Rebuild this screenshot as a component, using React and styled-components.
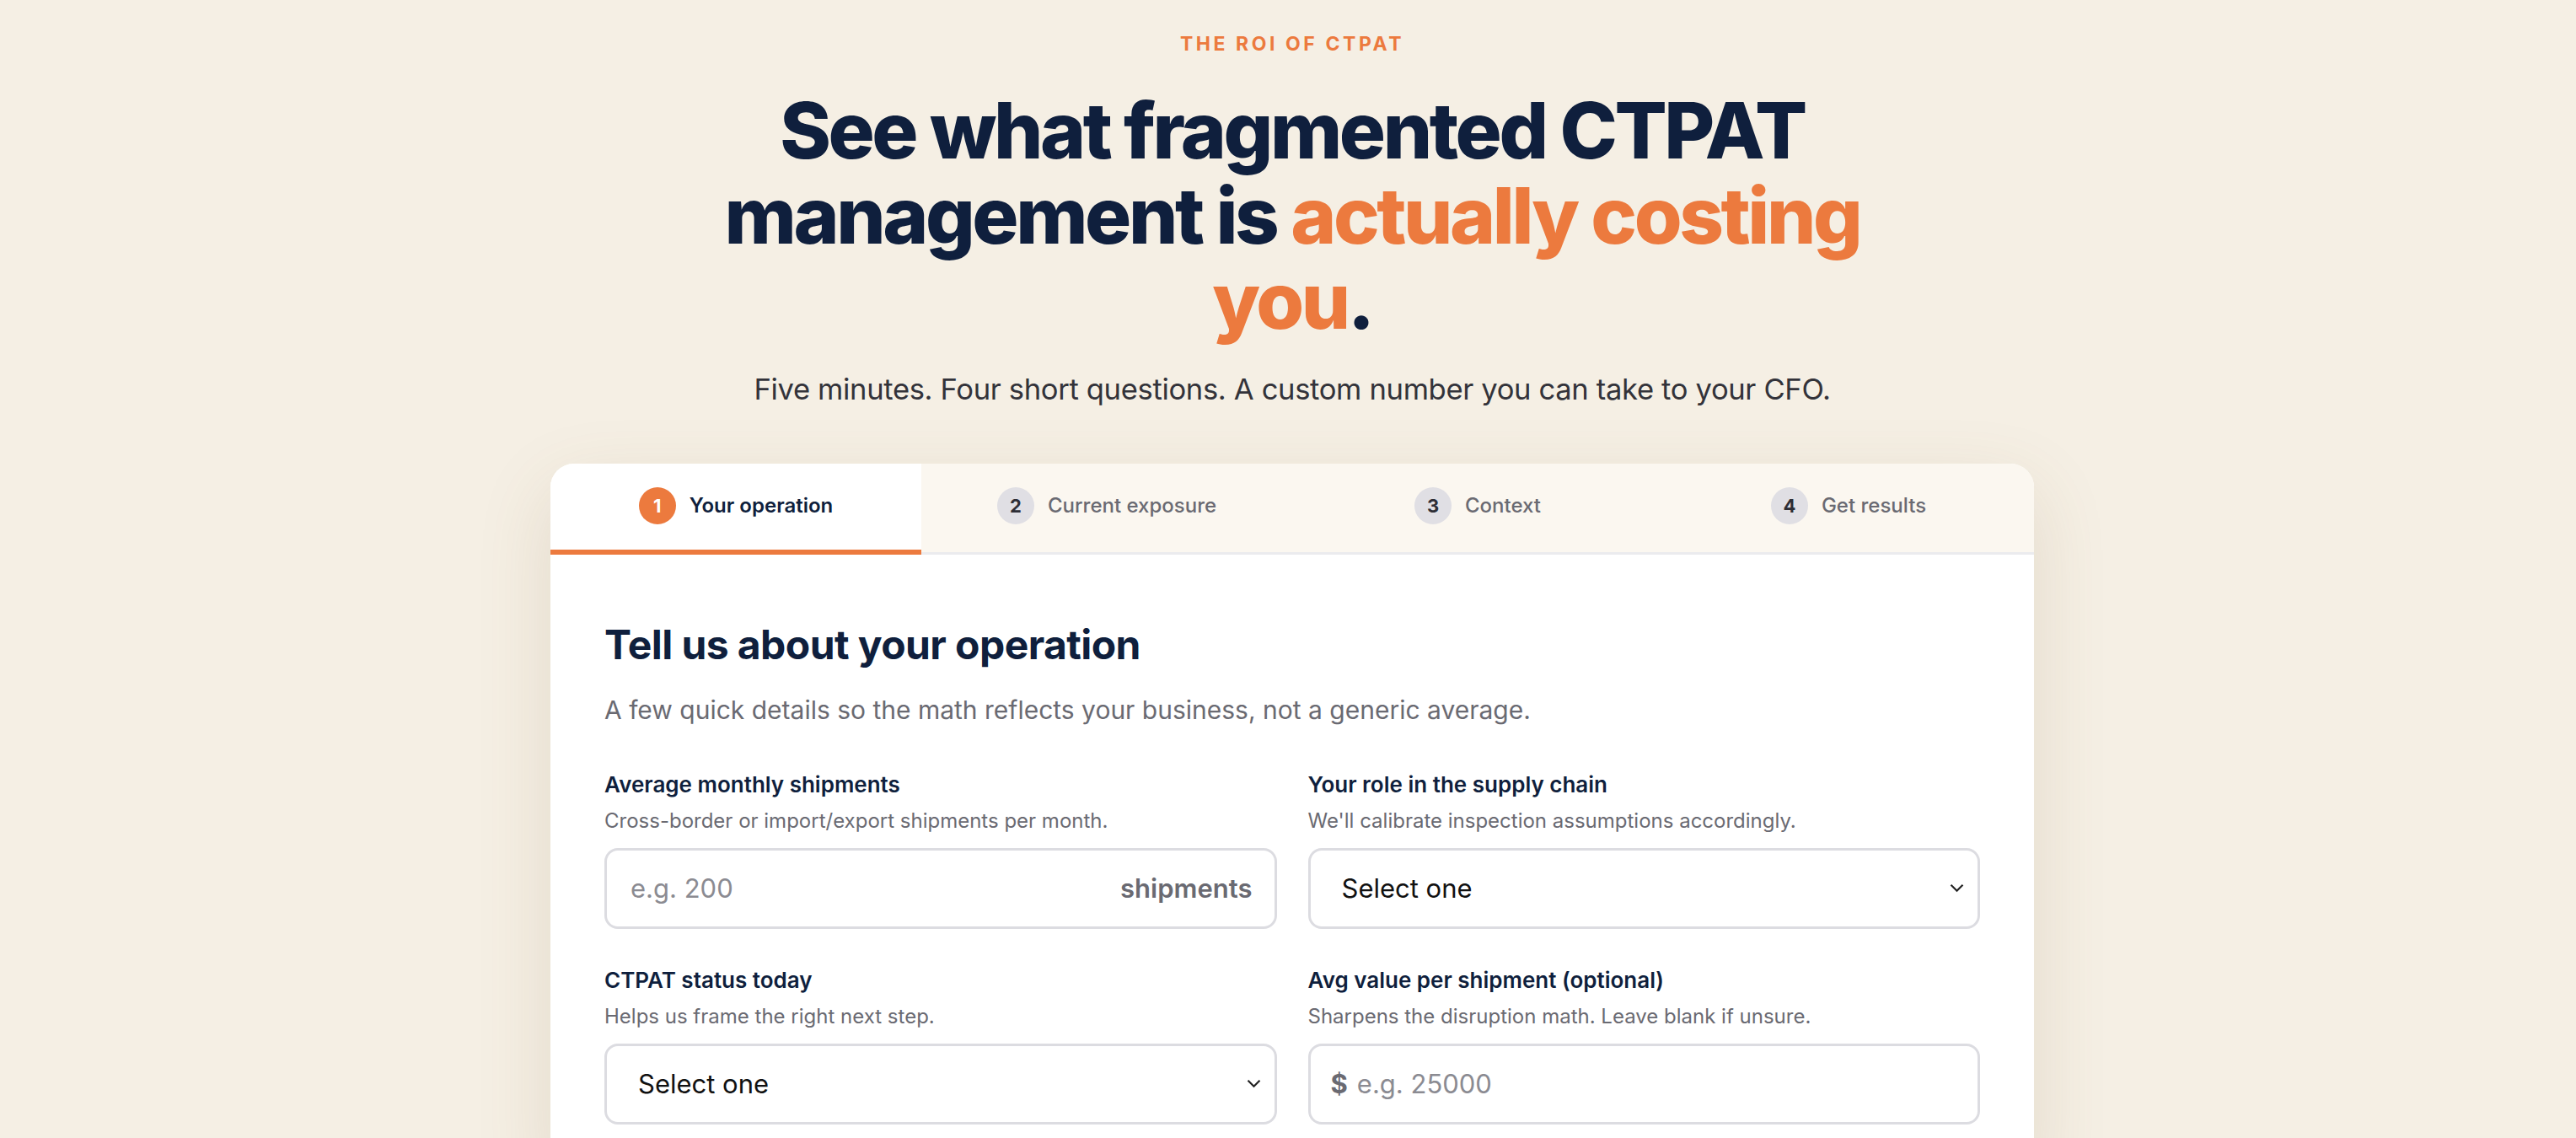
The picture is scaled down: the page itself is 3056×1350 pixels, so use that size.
import React from "react";
import styled, { createGlobalStyle } from "styled-components";

const GlobalStyle = createGlobalStyle`
  * { box-sizing: border-box; }
  body {
    margin: 0;
    background: #f5efe4;
    font-family: Inter, "Noto Sans", sans-serif;
    color: #0f1f3d;
  }
`;

const Page = styled.div`
  min-height: 1350px;
  display: flex;
  flex-direction: column;
  align-items: center;
  padding: 38px 0 0 10px;
`;

const Eyebrow = styled.div`
  font-size: 23px;
  font-weight: 700;
  letter-spacing: 0.155em;
  color: #ec7a3e;
  text-transform: uppercase;
`;

const Headline = styled.h1`
  margin: 38px 0 0;
  max-width: 1440px;
  text-align: center;
  font-size: 92px;
  line-height: 101px;
  font-weight: 800;
  letter-spacing: -0.037em;
  color: #0f1f3d;
`;

const Accent = styled.span`
  color: #ec7a3e;
`;

const Lead = styled.p`
  margin: 33px 0 0;
  font-size: 34.6px;
  color: #33333a;
  letter-spacing: -0.01em;
`;

const Card = styled.div`
  margin-top: 68px;
  width: 1760px;
  background: #fff;
  border-radius: 28px;
  overflow: hidden;
  box-shadow: 0 30px 90px rgba(120, 95, 50, 0.14);
`;

const Tabs = styled.div`
  display: grid;
  grid-template-columns: repeat(4, 1fr);
  background: #fbf7f0;
  border-bottom: 3px solid #ebebee;
`;

const Tab = styled.div`
  height: 108px;
  display: flex;
  align-items: center;
  justify-content: center;
  gap: 16px;
  background: ${(p) => (p.$active ? "#fff" : "transparent")};
  border-bottom: 6px solid ${(p) => (p.$active ? "#ec7a3e" : "transparent")};
  margin-bottom: -3px;
  padding-bottom: 3px;
  font-size: 24px;
  font-weight: ${(p) => (p.$active ? 600 : 500)};
  color: ${(p) => (p.$active ? "#0f1f3d" : "#6a6a72")};
`;

const Badge = styled.span`
  width: 44px;
  height: 44px;
  border-radius: 50%;
  display: flex;
  align-items: center;
  justify-content: center;
  font-size: 22px;
  font-weight: 700;
  background: ${(p) => (p.$active ? "#ec7a3e" : "#e0dfe4")};
  color: ${(p) => (p.$active ? "#fff" : "#2e2e36")};
`;

const Body = styled.div`
  padding: 78px 64px 60px;
`;

const Title = styled.h2`
  margin: 0;
  font-size: 48px;
  font-weight: 700;
  letter-spacing: -0.012em;
  line-height: 1.2;
  color: #0f1f3d;
`;

const Intro = styled.p`
  margin: 30px 0 0;
  font-size: 30px;
  color: #6a6a72;
`;

const Grid = styled.div`
  margin-top: 54px;
  display: grid;
  grid-template-columns: 1fr 1fr;
  column-gap: 37px;
  row-gap: 44px;
`;

const Field = styled.div`
  display: flex;
  flex-direction: column;
`;

const Label = styled.div`
  font-size: 26px;
  font-weight: 600;
  color: #0f1f3d;
  line-height: 34px;
`;

const Help = styled.div`
  margin-top: 10px;
  font-size: 24px;
  color: #6a6a72;
  line-height: 32px;
`;

const Box = styled.div`
  margin-top: 16px;
  height: 96px;
  border: 3px solid #dcdce1;
  border-radius: 16px;
  display: flex;
  align-items: center;
  padding: ${(p) => (p.$select ? "0 16px 0 37px" : "0 26px 0 28px")};
  font-size: 31px;
  gap: 12px;
`;

const Placeholder = styled.span`
  flex: 1;
  color: #8b8b92;
`;

const Suffix = styled.span`
  font-weight: 600;
  color: #6a6a72;
`;

const Prefix = styled.span`
  font-weight: 700;
  color: #6a6a72;
  margin-left: -4px;
  margin-right: -1px;
`;

const Value = styled.span`
  flex: 1;
  color: #111;
`;

const Chevron = () => (
  <svg width="17" height="11" viewBox="0 0 17 11" fill="none">
    <path d="M1.5 1.8l7 7 7-7" stroke="#222" strokeWidth="2.2" />
  </svg>
);

const steps = ["Your operation", "Current exposure", "Context", "Get results"];

export default function App() {
  return (
    <>
      <GlobalStyle />
      <Page>
        <Eyebrow>The ROI of CTPAT</Eyebrow>
        <Headline>
          See what fragmented CTPAT management is{" "}
          <Accent>actually costing you</Accent>.
        </Headline>
        <Lead>Five minutes. Four short questions. A custom number you can take to your CFO.</Lead>

        <Card>
          <Tabs>
            {steps.map((s, i) => (
              <Tab key={s} $active={i === 0}>
                <Badge $active={i === 0}>{i + 1}</Badge>
                {s}
              </Tab>
            ))}
          </Tabs>
          <Body>
            <Title>Tell us about your operation</Title>
            <Intro>A few quick details so the math reflects your business, not a generic average.</Intro>
            <Grid>
              <Field>
                <Label>Average monthly shipments</Label>
                <Help>Cross-border or import/export shipments per month.</Help>
                <Box>
                  <Placeholder>e.g. 200</Placeholder>
                  <Suffix>shipments</Suffix>
                </Box>
              </Field>
              <Field>
                <Label>Your role in the supply chain</Label>
                <Help>We'll calibrate inspection assumptions accordingly.</Help>
                <Box $select>
                  <Value>Select one</Value>
                  <Chevron />
                </Box>
              </Field>
              <Field>
                <Label>CTPAT status today</Label>
                <Help>Helps us frame the right next step.</Help>
                <Box $select>
                  <Value>Select one</Value>
                  <Chevron />
                </Box>
              </Field>
              <Field>
                <Label>Avg value per shipment (optional)</Label>
                <Help>Sharpens the disruption math. Leave blank if unsure.</Help>
                <Box>
                  <Prefix>$</Prefix>
                  <Placeholder>e.g. 25000</Placeholder>
                </Box>
              </Field>
            </Grid>
          </Body>
        </Card>
      </Page>
    </>
  );
}
